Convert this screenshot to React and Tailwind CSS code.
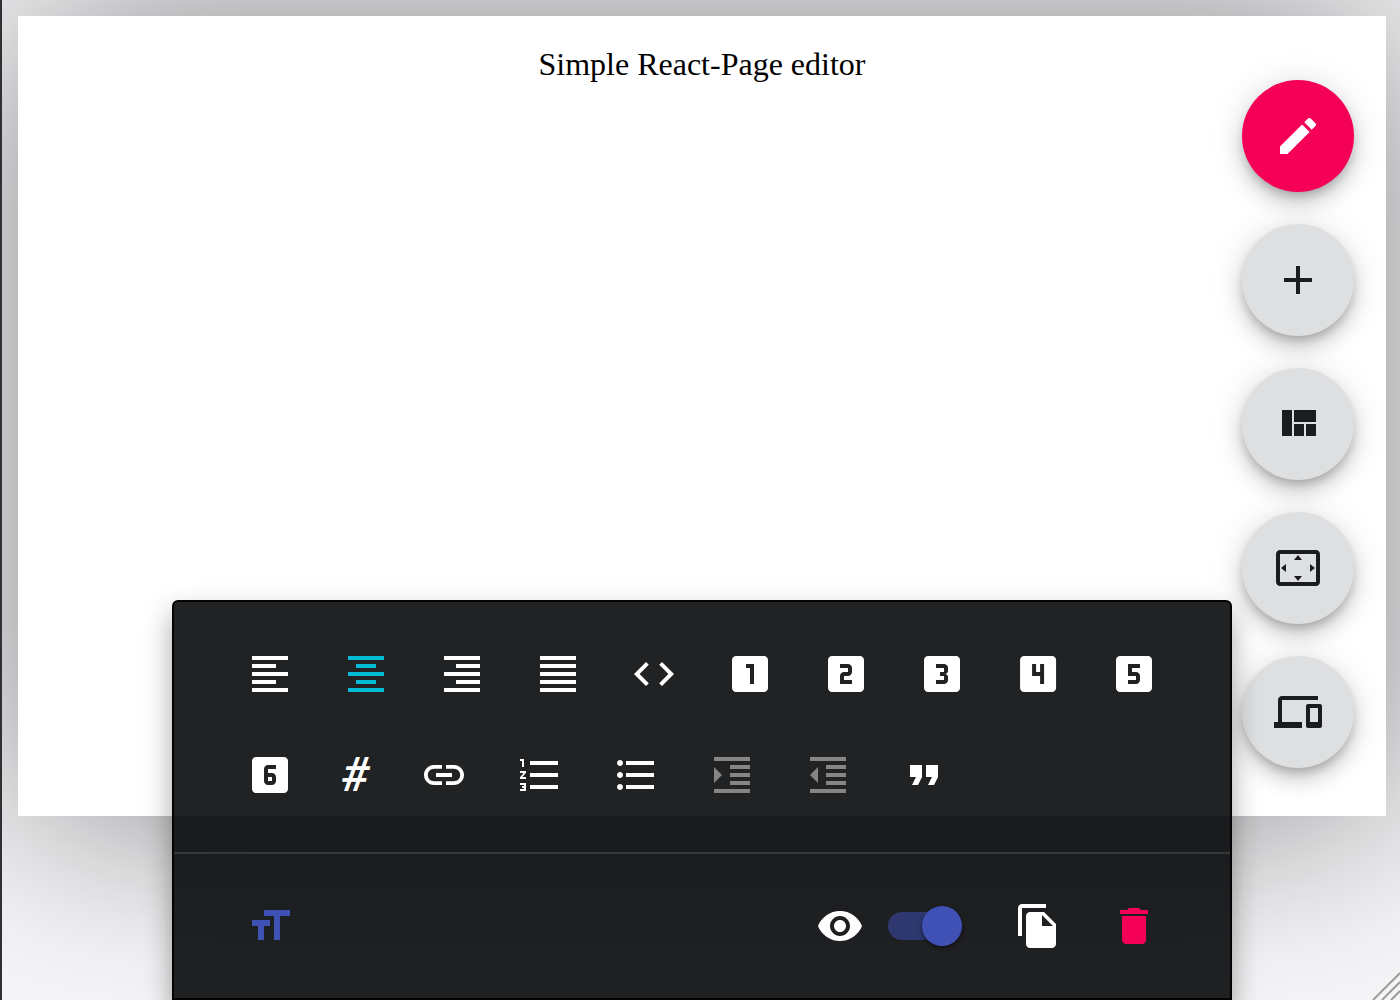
import React from 'react';

const paths = {
  alignLeft: 'M15 15H3v2h12v-2zm0-8H3v2h12V7zM3 13h18v-2H3v2zm0 8h18v-2H3v2zM3 3v2h18V3H3z',
  alignCenter: 'M7 15v2h10v-2H7zm-4 6h18v-2H3v2zm0-8h18v-2H3v2zm4-6v2h10V7H7zM3 3v2h18V3H3z',
  alignRight: 'M3 21h18v-2H3v2zm6-4h12v-2H9v2zm-6-4h18v-2H3v2zm6-4h12V7H9v2zM3 3v2h18V3H3z',
  alignJustify: 'M3 21h18v-2H3v2zm0-4h18v-2H3v2zm0-4h18v-2H3v2zm0-4h18V7H3v2zm0-6v2h18V3H3z',
  code: 'M9.4 16.6L4.8 12l4.6-4.6L8 6l-6 6 6 6 1.4-1.4zm5.2 0l4.6-4.6-4.6-4.6L16 6l6 6-6 6-1.4-1.4z',
  one: 'M19 3H5c-1.1 0-2 .9-2 2v14c0 1.1.9 2 2 2h14c1.1 0 2-.9 2-2V5c0-1.1-.9-2-2-2zm-5 14h-2V9h-2V7h4v10z',
  two: 'M19 3H5c-1.1 0-1.99.9-1.99 2L3 19c0 1.1.9 2 2 2h14c1.1 0 2-.9 2-2V5c0-1.1-.9-2-2-2zm-4 8c0 1.1-.9 2-2 2h-2v2h4v2H9v-4c0-1.11.9-2 2-2h2V9H9V7h4c1.1 0 2 .89 2 2v2z',
  three: 'M19.01 3h-14c-1.1 0-2 .9-2 2v14c0 1.1.9 2 2 2h14c1.1 0 2-.9 2-2V5c0-1.1-.9-2-2-2zm-4 7.5c0 .83-.67 1.5-1.5 1.5.83 0 1.5.67 1.5 1.5V15c0 1.11-.9 2-2 2h-4v-2h4v-2h-2v-2h2V9h-4V7h4c1.1 0 2 .89 2 2v1.5z',
  four: 'M19.04 3h-14c-1.1 0-2 .9-2 2v14c0 1.1.9 2 2 2h14c1.1 0 2-.9 2-2V5c0-1.1-.9-2-2-2zm-4 14h-2v-4h-4V7h2v4h2V7h2v10z',
  five: 'M19 3H5c-1.1 0-2 .9-2 2v14c0 1.1.9 2 2 2h14c1.1 0 2-.9 2-2V5c0-1.1-.9-2-2-2zm-4 6h-4v2h2c1.1 0 2 .89 2 2v2c0 1.11-.9 2-2 2H9v-2h4v-2H9V7h6v2z',
  six: 'M11 15h2v-2h-2v2zm8-12H5c-1.1 0-2 .9-2 2v14c0 1.1.9 2 2 2h14c1.1 0 2-.9 2-2V5c0-1.1-.9-2-2-2zm-4 6h-4v2h2c1.1 0 2 .89 2 2v2c0 1.11-.9 2-2 2h-2c-1.1 0-2-.89-2-2V9c0-1.11.9-2 2-2h4v2z',
  link: 'M3.9 12c0-1.71 1.39-3.1 3.1-3.1h4V7H7c-2.76 0-5 2.24-5 5s2.24 5 5 5h4v-1.9H7c-1.71 0-3.1-1.39-3.1-3.1zM8 13h8v-2H8v2zm9-6h-4v1.9h4c1.71 0 3.1 1.39 3.1 3.1s-1.39 3.1-3.1 3.1h-4V17h4c2.76 0 5-2.24 5-5s-2.24-5-5-5z',
  numbered: 'M2 17h2v.5H3v1h1v.5H2v1h3v-4H2v1zm1-9h1V4H2v1h1v3zm-1 3h1.8L2 13.1v.9h3v-1H3.2L5 10.9V10H2v1zm5-6v2h14V5H7zm0 14h14v-2H7v2zm0-6h14v-2H7v2z',
  bulleted: 'M4 10.5c-.83 0-1.5.67-1.5 1.5s.67 1.5 1.5 1.5 1.5-.67 1.5-1.5-.67-1.5-1.5-1.5zm0-6c-.83 0-1.5.67-1.5 1.5S3.17 7.5 4 7.5 5.5 6.83 5.5 6 4.83 4.5 4 4.5zm0 12c-.83 0-1.5.68-1.5 1.5s.68 1.5 1.5 1.5 1.5-.68 1.5-1.5-.67-1.5-1.5-1.5zM7 19h14v-2H7v2zm0-6h14v-2H7v2zm0-8v2h14V5H7z',
  indentMore: 'M3 21h18v-2H3v2zM3 8v8l4-4-4-4zm8 9h10v-2H11v2zM3 3v2h18V3H3zm8 6h10V7H11v2zm0 4h10v-2H11v2z',
  indentLess: 'M11 17h10v-2H11v2zm-8-5l4 4V8l-4 4zm0 9h18v-2H3v2zM3 3v2h18V3H3zm8 6h10V7H11v2zm0 4h10v-2H11v2z',
  quote: 'M6 17h3l2-4V7H5v6h3zm8 0h3l2-4V7h-6v6h3z',
  size: 'M9 4v3h5v12h3V7h5V4H9zm-6 8h3v7h3v-7h3V9H3v3z',
  eye: 'M12 4.5C7 4.5 2.73 7.61 1 12c1.73 4.39 6 7.5 11 7.5s9.27-3.11 11-7.5c-1.73-4.39-6-7.5-11-7.5zM12 17c-2.76 0-5-2.24-5-5s2.24-5 5-5 5 2.24 5 5-2.24 5-5 5zm0-8c-1.66 0-3 1.34-3 3s1.34 3 3 3 3-1.34 3-3-1.34-3-3-3z',
  copy: 'M16 1H4c-1.1 0-2 .9-2 2v14h2V3h12V1zm-1 4l6 6v10c0 1.1-.9 2-2 2H7.99C6.89 23 6 22.1 6 21l.01-14c0-1.1.89-2 1.99-2h7zm-1 7h5.5L14 6.5V12z',
  trash: 'M6 19c0 1.1.9 2 2 2h8c1.1 0 2-.9 2-2V7H6v12zM19 4h-3.5l-1-1h-5l-1 1H5v2h14V4z',
  edit: 'M3 17.25V21h3.75L17.81 9.94l-3.75-3.75L3 17.25zM20.71 7.04c.39-.39.39-1.02 0-1.41l-2.34-2.34c-.39-.39-1.02-.39-1.41 0l-1.83 1.83 3.75 3.75 1.83-1.83z',
  add: 'M19 13h-6v6h-2v-6H5v-2h6V5h2v6h6v2z',
  quilt: 'M10 18h5v-6h-5v6zm-6 0h5V5H4v13zm12 0h5v-6h-5v6zM10 5v6h11V5H10z',
  overscan: 'M12.01 5.5L10 8h4l-1.99-2.5zM18 10v4l2.5-1.99L18 10zM6 10l-2.5 2.01L6 14v-4zm8 6h-4l2.01 2.5L14 16zm7-13H3c-1.1 0-2 .9-2 2v14c0 1.1.9 2 2 2h18c1.1 0 2-.9 2-2V5c0-1.1-.9-2-2-2zm0 16.01H3V4.99h18v14.02z',
  devices: 'M4 6h18V4H4c-1.1 0-2 .9-2 2v11H0v3h14v-3H4V6zm19 2h-6c-.55 0-1 .45-1 1v10c0 .55.45 1 1 1h6c.55 0 1-.45 1-1V9c0-.55-.45-1-1-1zm-1 9h-4v-7h4v7z',
};

function Icon({ d, className = '' }) {
  return (
    <svg viewBox="0 0 24 24" fill="currentColor" className={`h-12 w-12 shrink-0 ${className}`}>
      <path d={d} />
    </svg>
  );
}

function ToolButton({ d, className = 'text-white' }) {
  return (
    <div className="flex h-24 w-24 items-center justify-center">
      <Icon d={d} className={className} />
    </div>
  );
}

function Fab({ d, primary }) {
  const color = primary ? 'bg-[#f50057] text-white' : 'bg-[#dedfe1] text-[#1b1c1e]';
  return (
    <div
      className={`flex h-28 w-28 items-center justify-center rounded-full shadow-[0_6px_10px_-2px_rgba(0,0,0,0.2),0_12px_20px_0_rgba(0,0,0,0.14),0_2px_36px_0_rgba(0,0,0,0.12)] ${color}`}
    >
      <Icon d={d} />
    </div>
  );
}

export default function App() {
  return (
    <div className="relative flex h-[1000px] w-full overflow-hidden bg-[#f7f7f9]">
      <div className="relative z-10 h-full w-[2px] shrink-0 bg-[#303134]" />
      <div className="pl-4 pt-4">
        <div className="h-[800px] w-[1368px] bg-white pt-[28px] text-center font-['Liberation_Serif',serif] text-[32px] leading-[40px] text-black shadow-[0_0_200px_rgba(0,0,0,0.47)]">
          Simple React-Page editor
        </div>
      </div>

      {/* mode switcher */}
      <div className="absolute right-[46px] top-20 flex flex-col gap-8">
        <Fab d={paths.edit} primary />
        <Fab d={paths.add} />
        <Fab d={paths.quilt} />
        <Fab d={paths.overscan} />
        <Fab d={paths.devices} />
      </div>

      {/* bottom toolbar */}
      <div className="absolute left-[172px] top-[600px] h-[400px] w-[1060px] rounded-t-[6px] border-2 border-black/90 bg-[rgba(0,1,3,0.87)] shadow-[0_16px_20px_-10px_rgba(0,0,0,0.2),0_16px_24px_2px_rgba(0,0,0,0.14),0_12px_30px_5px_rgba(0,0,0,0.12)]">
        <div className="px-12 pt-6">
          <div className="flex">
            <ToolButton d={paths.alignLeft} />
            <ToolButton d={paths.alignCenter} className="text-[#00bcd4]" />
            <ToolButton d={paths.alignRight} />
            <ToolButton d={paths.alignJustify} />
            <ToolButton d={paths.code} />
            <ToolButton d={paths.one} />
            <ToolButton d={paths.two} />
            <ToolButton d={paths.three} />
            <ToolButton d={paths.four} />
            <ToolButton d={paths.five} />
          </div>
          <div className="flex h-[106px] items-center">
            <ToolButton d={paths.six} />
            <div className="flex w-[78px] items-center justify-center pr-[4px] font-['Roboto',sans-serif] text-[48px] font-medium italic leading-none text-white">
              #
            </div>
            <ToolButton d={paths.link} />
            <ToolButton d={paths.numbered} />
            <ToolButton d={paths.bulleted} />
            <ToolButton d={paths.indentMore} className="text-white/45" />
            <ToolButton d={paths.indentLess} className="text-white/45" />
            <ToolButton d={paths.quote} />
          </div>
        </div>
        <div className="mt-6 h-[2px] bg-white/12" />
        <div className="flex items-center py-12 pl-[72px] pr-12">
          <Icon d={paths.size} className="text-[#3f51b5]" />
          <div className="ml-auto flex items-center">
            <Icon d={paths.eye} className="text-white" />
            <div className="relative ml-6 flex h-10 w-[74px] items-center">
              <div className="h-7 w-[68px] rounded-full bg-[#2e386f]" />
              <div className="absolute right-0 top-0 h-10 w-10 rounded-full bg-[#3f51b5] shadow-[0_2px_4px_-1px_rgba(0,0,0,0.4),0_2px_4px_rgba(0,0,0,0.3)]" />
            </div>
            <div className="ml-[28px] flex h-12 w-24 items-center justify-center">
              <Icon d={paths.copy} className="text-white" />
            </div>
            <div className="flex h-12 w-24 items-center justify-center">
              <Icon d={paths.trash} className="text-[#f50057]" />
            </div>
          </div>
        </div>
      </div>

      {/* window resize grip */}
      <svg viewBox="0 0 28 28" className="absolute bottom-0 right-0 h-7 w-7 text-[#9b9b9b]" stroke="currentColor" strokeWidth="2">
        <path d="M28 1L1 28M28 10L10 28M28 19L19 28" />
      </svg>
    </div>
  );
}
